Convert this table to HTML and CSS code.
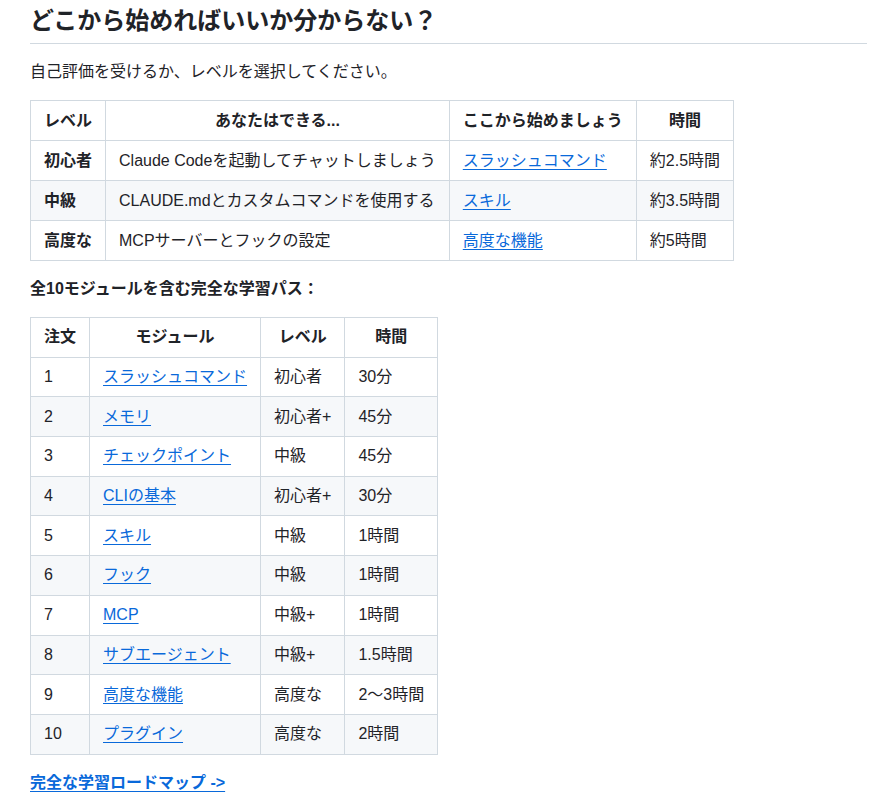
FILE: index.html
```html
<!DOCTYPE html>
<html lang="ja">
<head>
<meta charset="utf-8">
<link rel="stylesheet" href="styles.css">
</head>
<body>
<div class="markdown-body">
  <h2 class="title">どこから始めればいいか分からない？</h2>
  <p>自己評価を受けるか、レベルを選択してください。</p>
  <table>
    <thead>
      <tr><th>レベル</th><th>あなたはできる...</th><th>ここから始めましょう</th><th>時間</th></tr>
    </thead>
    <tbody>
      <tr><td><strong>初心者</strong></td><td>Claude Codeを起動してチャットしましょう</td><td><a href="#">スラッシュコマンド</a></td><td>約2.5時間</td></tr>
      <tr><td><strong>中級</strong></td><td>CLAUDE.mdとカスタムコマンドを使用する</td><td><a href="#">スキル</a></td><td>約3.5時間</td></tr>
      <tr><td><strong>高度な</strong></td><td>MCPサーバーとフックの設定</td><td><a href="#">高度な機能</a></td><td>約5時間</td></tr>
    </tbody>
  </table>
  <p><strong>全10モジュールを含む完全な学習パス：</strong></p>
  <table class="compact">
    <thead>
      <tr><th>注文</th><th>モジュール</th><th>レベル</th><th>時間</th></tr>
    </thead>
    <tbody>
      <tr><td>1</td><td><a href="#">スラッシュコマンド</a></td><td>初心者</td><td>30分</td></tr>
      <tr><td>2</td><td><a href="#">メモリ</a></td><td>初心者+</td><td>45分</td></tr>
      <tr><td>3</td><td><a href="#">チェックポイント</a></td><td>中級</td><td>45分</td></tr>
      <tr><td>4</td><td><a href="#">CLIの基本</a></td><td>初心者+</td><td>30分</td></tr>
      <tr><td>5</td><td><a href="#">スキル</a></td><td>中級</td><td>1時間</td></tr>
      <tr><td>6</td><td><a href="#">フック</a></td><td>中級</td><td>1時間</td></tr>
      <tr><td>7</td><td><a href="#">MCP</a></td><td>中級+</td><td>1時間</td></tr>
      <tr><td>8</td><td><a href="#">サブエージェント</a></td><td>中級+</td><td>1.5時間</td></tr>
      <tr><td>9</td><td><a href="#">高度な機能</a></td><td>高度な</td><td>2〜3時間</td></tr>
      <tr><td>10</td><td><a href="#">プラグイン</a></td><td>高度な</td><td>2時間</td></tr>
    </tbody>
  </table>
  <p><a href="#"><strong>完全な学習ロードマップ -&gt;</strong></a></p>
</div>
</body>
</html>
```

FILE: styles.css
```css
html, body {
  margin: 0;
  padding: 0;
  background: #ffffff;
}

.markdown-body {
  padding: 6px 28px 0 30px;
  font-family: "Liberation Sans", "Noto Sans CJK JP", sans-serif;
  font-size: 16px;
  line-height: 24px;
  color: #1f2328;
}

.title {
  margin: 0 0 16px;
  padding-bottom: 7px;
  font-size: 24px;
  line-height: 30px;
  font-weight: 700;
  border-bottom: 1px solid #d1d9e0;
}

p {
  margin: 0 0 16px;
}

strong {
  font-weight: 700;
}

a {
  color: #0969da;
  text-decoration: underline;
  text-underline-offset: 3px;
}

table {
  border-collapse: collapse;
  border-spacing: 0;
  margin: 0 0 16px;
}

th, td {
  border: 1px solid #d1d9e0;
  padding: 7.5px 13px;
  line-height: 24px;
}

.compact th, .compact td {
  padding-top: 7.35px;
  padding-bottom: 7.35px;
}

th {
  font-weight: 700;
  text-align: center;
}

td {
  text-align: left;
}

tbody tr:nth-child(2n) {
  background: #f6f8fa;
}
```
